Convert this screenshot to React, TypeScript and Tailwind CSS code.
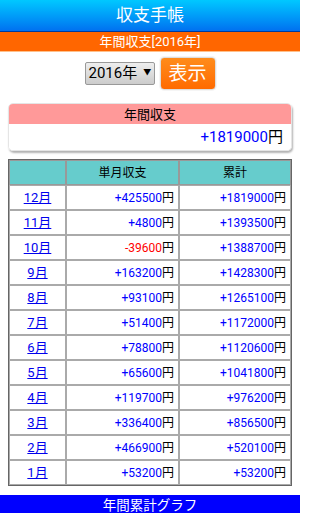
import React from "react";

const rows: [string, number, number][] = [
  ["12月", 425500, 1819000],
  ["11月", 4800, 1393500],
  ["10月", -39600, 1388700],
  ["9月", 163200, 1428300],
  ["8月", 93100, 1265100],
  ["7月", 51400, 1172000],
  ["6月", 78800, 1120600],
  ["5月", 65600, 1041800],
  ["4月", 119700, 976200],
  ["3月", 336400, 856500],
  ["2月", 466900, 520100],
  ["1月", 53200, 53200],
];

function Amount({ v }: { v: number }) {
  const neg = v < 0;
  return (
    <>
      <span className={neg ? "text-[#ff0000]" : "text-[#0000ff]"}>
        {neg ? "-" + Math.abs(v) : "+" + v}
      </span>
      <span className="text-black">円</span>
    </>
  );
}

export default function App() {
  return (
    <div
      className="w-[300px] h-[513px] overflow-hidden bg-white flex flex-col"
      style={{ fontFamily: 'Roboto, "Noto Sans CJK JP", sans-serif' }}
    >
      <div className="h-[32px] shrink-0 bg-gradient-to-b from-[#00c8ff] to-[#0070f0] border-b border-[#003a99] flex items-center justify-center text-white text-[17px] leading-none">
        収支手帳
      </div>
      <div className="h-[20px] shrink-0 bg-[#ff6600] border-b border-[#ffc08a] flex items-center justify-center text-white text-[13px] leading-none">
        年間収支[2016年]
      </div>
      <div className="flex items-center justify-center gap-[5px] mt-[4px] h-[34px] shrink-0">
        <div className="h-[23px] w-[70px] border border-[#999] rounded-[2px] bg-gradient-to-b from-[#eeeeee] to-[#cccccc] flex items-center pl-[3px] text-[15px] text-black leading-none">
          2016年
          <span className="text-[8px] ml-[6px]">▼</span>
        </div>
        <div className="h-[33px] w-[56px] rounded-[4px] border border-[#dddddd] bg-gradient-to-b from-[#ff8c1a] to-[#ff6a00] flex items-center justify-center text-white text-[19px] leading-none shadow-[0_0_0_1px_#f5f5f5]">
          表示
        </div>
      </div>
      <div className="mx-[8px] mt-[13px] rounded-[5px] overflow-hidden shadow-[1px_2px_2px_rgba(0,0,0,0.3)] border border-[#e5e5e5] shrink-0">
        <div className="h-[20px] bg-[#ff9999] flex items-center justify-center text-[13px] text-black leading-none">
          年間収支
        </div>
        <div className="h-[26px] bg-white flex items-center justify-end pr-[8px] text-[15px] leading-none">
          <Amount v={1819000} />
        </div>
      </div>
      <table className="mx-[8px] mt-[8px] w-[284px] border border-[#666] border-separate border-spacing-0 text-[12px] leading-none shrink-0">
        <thead>
          <tr className="h-[25px] bg-[#66cccc]">
            <th className="w-[57px] border border-[#999] font-normal"></th>
            <th className="w-[113px] border border-[#999] font-normal text-black">単月収支</th>
            <th className="border border-[#999] font-normal text-black">累計</th>
          </tr>
        </thead>
        <tbody>
          {rows.map(([m, a, b]) => (
            <tr key={m} className="h-[25px] bg-white">
              <td className="border border-[#aaa] text-center text-[13px]">
                <span className="text-[#0000ee] underline">{m}</span>
              </td>
              <td className="border border-[#aaa] text-right pr-[4px]">
                <Amount v={a} />
              </td>
              <td className="border border-[#aaa] text-right pr-[4px]">
                <Amount v={b} />
              </td>
            </tr>
          ))}
        </tbody>
      </table>
      <div className="mt-[9px] h-[22px] shrink-0 bg-[#0000ff] flex items-center justify-center text-white text-[13.5px] leading-none">
        年間累計グラフ
      </div>
    </div>
  );
}
